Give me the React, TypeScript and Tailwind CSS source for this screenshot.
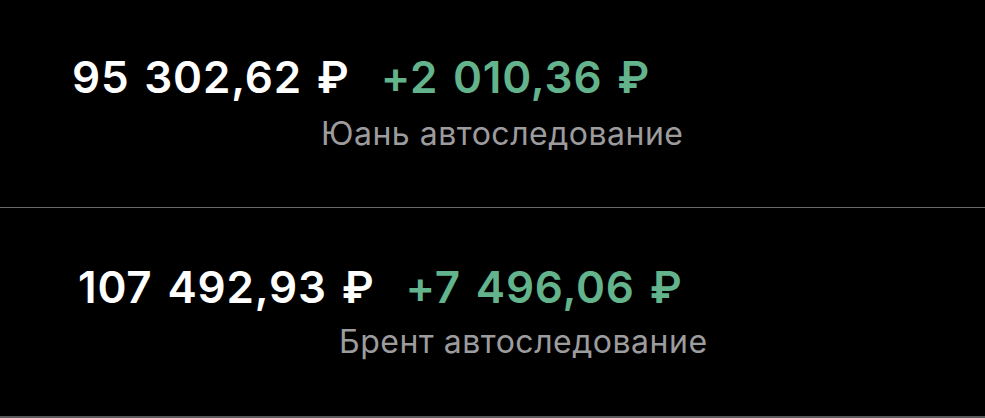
import React from "react";

function Row({ amount, delta, label, padL, labelL, pt, mt }: { amount: string; delta: string; label: string; padL: string; labelL: string; pt: string; mt: string }) {
  return (
    <div className={`flex flex-col ${pt}`}>
      <div className={`flex items-baseline gap-[31px] ${padL}`}>
        <span className="text-[44px] font-semibold leading-[52px] text-white tracking-[0.8px] [word-spacing:3px] whitespace-nowrap">{amount}</span>
        <span className="text-[44px] font-semibold leading-[52px] text-[#63b38c] tracking-[0.8px] [word-spacing:3px] whitespace-nowrap">{delta}</span>
      </div>
      <div className={`text-[32px] leading-[38px] text-[#9c9c9e] tracking-[0.5px] whitespace-nowrap ${mt} ${labelL}`}>{label}</div>
    </div>
  );
}

export default function App() {
  return (
    <div className="w-[985px] h-[418px] bg-black overflow-hidden flex flex-col" style={{ fontFamily: "Inter, 'Noto Sans', sans-serif" }}>
      <div className="h-[207px]">
        <Row amount="95 302,62 ₽" delta="+2 010,36 ₽" label="Юань автоследование" padL="pl-[72px]" labelL="pl-[321px]" pt="pt-[51px]" mt="mt-[12px]" />
      </div>
      <div className="h-px bg-[#6a6a6c]" />
      <div className="h-[208px]">
        <Row amount="107 492,93 ₽" delta="+7 496,06 ₽" label="Брент автоследование" padL="pl-[78px]" labelL="pl-[339px]" pt="pt-[53px]" mt="mt-[10px]" />
      </div>
      <div className="h-[2px] bg-[#5a5a5c]" />
    </div>
  );
}
